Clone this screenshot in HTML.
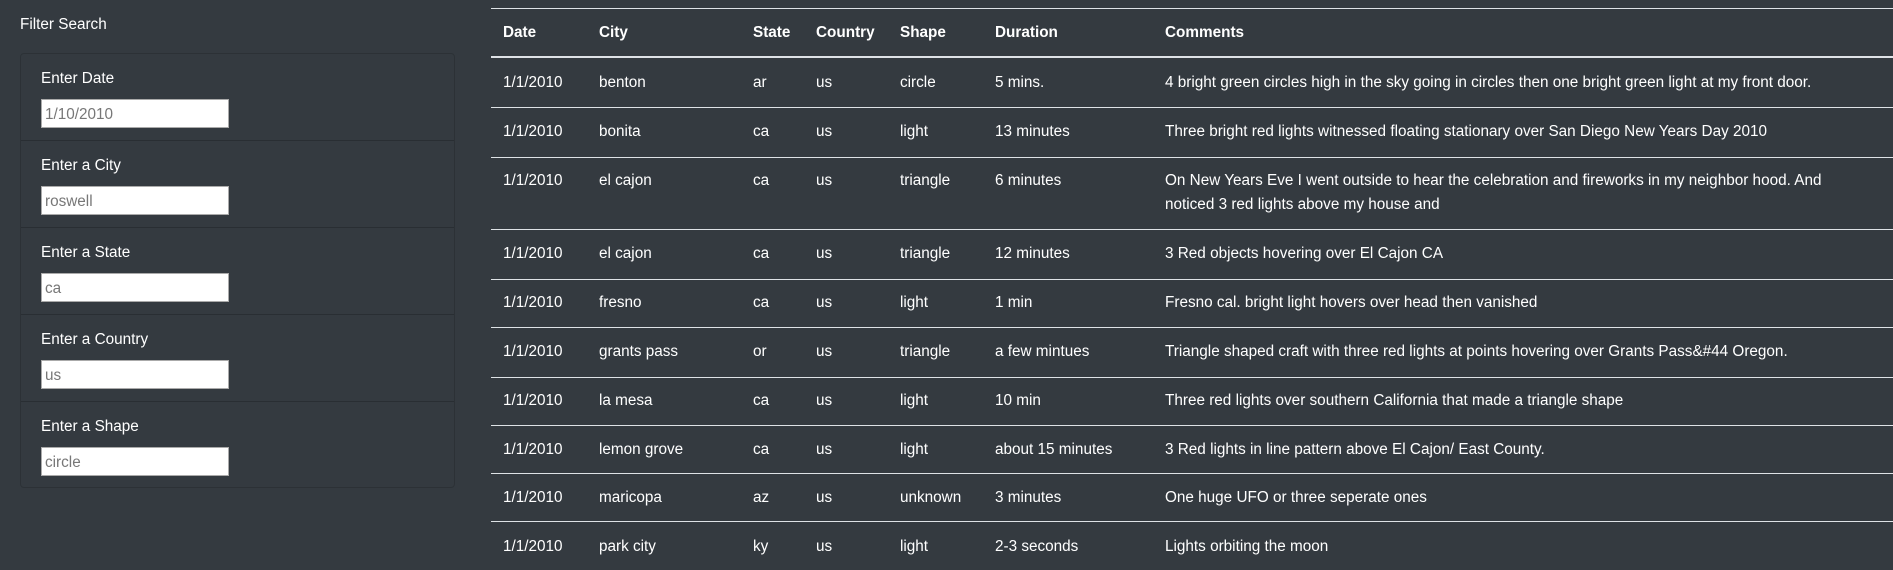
<!DOCTYPE html>
<html><head><meta charset="utf-8"><style>
*{margin:0;padding:0;box-sizing:border-box}
body{width:1893px;height:570px;background:#343a40;color:#fff;font-family:"Liberation Sans",sans-serif;font-size:15.3px;overflow:hidden;position:relative}
.abs{position:absolute;white-space:nowrap}
.card{position:absolute;left:20px;top:53px;width:435px;height:435px;border:1px solid rgba(0,0,0,.15);border-radius:4px}
.sec{position:absolute;left:0;width:433px;height:87px;border-bottom:1px solid rgba(0,0,0,.2)}
.sec .lb{position:absolute;left:20px;top:16px;font-size:15.3px}
.sec .in{position:absolute;left:20px;top:45px;width:188px;height:29px;background:#fff;color:#777;font-size:15.3px;padding:6px 3px 0;border:1px solid #aaa}
.line{position:absolute;left:491px;width:1402px;height:1px;background:#dee2e6}
.row{position:absolute;left:491px;width:1402px}
.row span{position:absolute;white-space:nowrap;line-height:24px}
.h span{font-weight:bold}
</style></head><body>
<div class="abs" style="left:20px;top:16px">Filter Search</div>
<div class="card">
<div class="sec" style="top:0"><div class="lb">Enter Date</div><div class="in">1/10/2010</div></div>
<div class="sec" style="top:87px"><div class="lb">Enter a City</div><div class="in">roswell</div></div>
<div class="sec" style="top:174px"><div class="lb">Enter a State</div><div class="in">ca</div></div>
<div class="sec" style="top:261px"><div class="lb">Enter a Country</div><div class="in">us</div></div>
<div class="sec" style="top:348px;border-bottom:none"><div class="lb">Enter a Shape</div><div class="in">circle</div></div>
</div>
<div class="line" style="top:8px"></div>
<div class="line" style="top:56px;height:2px"></div>
<div class="line" style="top:107px"></div>
<div class="line" style="top:157px"></div>
<div class="line" style="top:229px"></div>
<div class="line" style="top:279px"></div>
<div class="line" style="top:327px"></div>
<div class="line" style="top:377px"></div>
<div class="line" style="top:425px"></div>
<div class="line" style="top:473px"></div>
<div class="line" style="top:521px"></div>
<div class="row h" style="top:21px"><span style="left:12px">Date</span><span style="left:108px">City</span><span style="left:262px">State</span><span style="left:325px">Country</span><span style="left:409px">Shape</span><span style="left:504px">Duration</span><span style="left:674px">Comments</span></div>
<div class="row" style="top:71px"><span style="left:12px">1/1/2010</span><span style="left:108px">benton</span><span style="left:262px">ar</span><span style="left:325px">us</span><span style="left:409px">circle</span><span style="left:504px">5 mins.</span><span style="left:674px">4 bright green circles high in the sky going in circles then one bright green light at my front door.</span></div>
<div class="row" style="top:120px"><span style="left:12px">1/1/2010</span><span style="left:108px">bonita</span><span style="left:262px">ca</span><span style="left:325px">us</span><span style="left:409px">light</span><span style="left:504px">13 minutes</span><span style="left:674px">Three bright red lights witnessed floating stationary over San Diego New Years Day 2010</span></div>
<div class="row" style="top:169px"><span style="left:12px">1/1/2010</span><span style="left:108px">el cajon</span><span style="left:262px">ca</span><span style="left:325px">us</span><span style="left:409px">triangle</span><span style="left:504px">6 minutes</span><span style="left:674px">On New Years Eve I went outside to hear the celebration and fireworks in my neighbor hood. And<br>noticed 3 red lights above my house and</span></div>
<div class="row" style="top:242px"><span style="left:12px">1/1/2010</span><span style="left:108px">el cajon</span><span style="left:262px">ca</span><span style="left:325px">us</span><span style="left:409px">triangle</span><span style="left:504px">12 minutes</span><span style="left:674px">3 Red objects hovering over El Cajon CA</span></div>
<div class="row" style="top:291px"><span style="left:12px">1/1/2010</span><span style="left:108px">fresno</span><span style="left:262px">ca</span><span style="left:325px">us</span><span style="left:409px">light</span><span style="left:504px">1 min</span><span style="left:674px">Fresno cal. bright light hovers over head then vanished</span></div>
<div class="row" style="top:340px"><span style="left:12px">1/1/2010</span><span style="left:108px">grants pass</span><span style="left:262px">or</span><span style="left:325px">us</span><span style="left:409px">triangle</span><span style="left:504px">a few mintues</span><span style="left:674px">Triangle shaped craft with three red lights at points hovering over Grants Pass&amp;#44 Oregon.</span></div>
<div class="row" style="top:389px"><span style="left:12px">1/1/2010</span><span style="left:108px">la mesa</span><span style="left:262px">ca</span><span style="left:325px">us</span><span style="left:409px">light</span><span style="left:504px">10 min</span><span style="left:674px">Three red lights over southern California that made a triangle shape</span></div>
<div class="row" style="top:438px"><span style="left:12px">1/1/2010</span><span style="left:108px">lemon grove</span><span style="left:262px">ca</span><span style="left:325px">us</span><span style="left:409px">light</span><span style="left:504px">about 15 minutes</span><span style="left:674px">3 Red lights in line pattern above El Cajon/ East County.</span></div>
<div class="row" style="top:486px"><span style="left:12px">1/1/2010</span><span style="left:108px">maricopa</span><span style="left:262px">az</span><span style="left:325px">us</span><span style="left:409px">unknown</span><span style="left:504px">3 minutes</span><span style="left:674px">One huge UFO or three seperate ones</span></div>
<div class="row" style="top:535px"><span style="left:12px">1/1/2010</span><span style="left:108px">park city</span><span style="left:262px">ky</span><span style="left:325px">us</span><span style="left:409px">light</span><span style="left:504px">2-3 seconds</span><span style="left:674px">Lights orbiting the moon</span></div>
</body></html>
